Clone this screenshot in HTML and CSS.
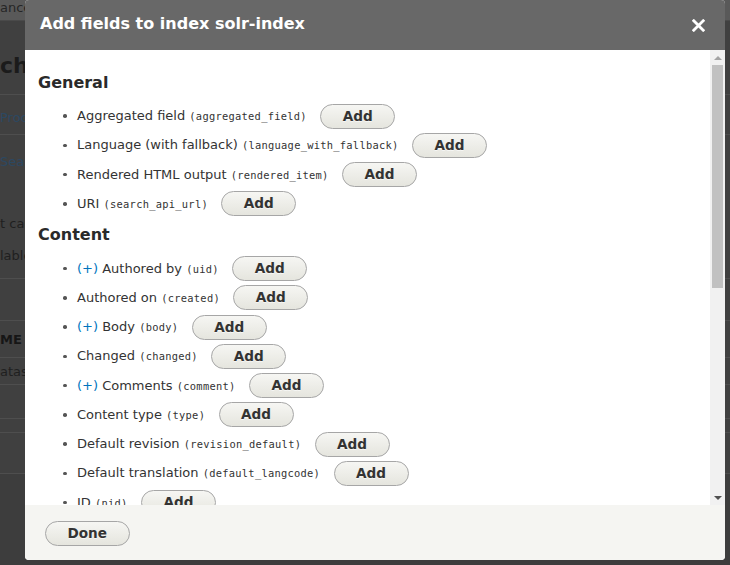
FILE: index.html
```html
<!DOCTYPE html>
<html lang="en">
<head>
<meta charset="utf-8">
<title>Add fields to index solr-index</title>
<link rel="stylesheet" href="styles.css">
</head>
<body>
<div class="page">
  <div class="page-top">ance</div>
  <div class="page-title">ch</div>
  <div class="page-row row-proc"><span class="plink">Proc</span></div>
  <div class="page-row row-block">
    <span class="plink line-sear">Sear</span>
    <span class="ptext line-car">t car</span>
    <span class="ptext line-lable">lable</span>
  </div>
  <div class="page-row row-empty1"></div>
  <div class="page-row row-head"><span class="pbold">ME</span></div>
  <div class="page-row row-data"><span class="ptext">atas</span></div>
  <div class="page-row row-empty2"></div>
  <div class="page-row row-empty3"></div>
  <div class="page-row row-empty4"></div>
</div>

<div class="dialog">
  <div class="titlebar">
    <span class="title">Add fields to index solr-index</span>
    <button class="close" aria-label="Close">
      <svg width="13" height="13" viewBox="0 0 13 13"><path d="M1.8 1.8 L11.2 11.2 M11.2 1.8 L1.8 11.2" stroke="#fff" stroke-width="2.8" stroke-linecap="square" fill="none"/></svg>
    </button>
  </div>
  <div class="body">
    <div class="content">
      <h2 class="group">General</h2>
      <ul class="fields">
        <li><span class="label">Aggregated field <code>(aggregated_field)</code></span><button class="btn">Add</button></li>
        <li><span class="label">Language (with fallback) <code>(language_with_fallback)</code></span><button class="btn">Add</button></li>
        <li><span class="label">Rendered HTML output <code>(rendered_item)</code></span><button class="btn">Add</button></li>
        <li><span class="label">URI <code>(search_api_url)</code></span><button class="btn">Add</button></li>
      </ul>
      <h2 class="group">Content</h2>
      <ul class="fields">
        <li><span class="label"><a class="expand">(+)</a> Authored by <code>(uid)</code></span><button class="btn">Add</button></li>
        <li><span class="label">Authored on <code>(created)</code></span><button class="btn">Add</button></li>
        <li><span class="label"><a class="expand">(+)</a> Body <code>(body)</code></span><button class="btn">Add</button></li>
        <li><span class="label">Changed <code>(changed)</code></span><button class="btn">Add</button></li>
        <li><span class="label"><a class="expand">(+)</a> Comments <code>(comment)</code></span><button class="btn">Add</button></li>
        <li><span class="label">Content type <code>(type)</code></span><button class="btn">Add</button></li>
        <li><span class="label">Default revision <code>(revision_default)</code></span><button class="btn">Add</button></li>
        <li><span class="label">Default translation <code>(default_langcode)</code></span><button class="btn">Add</button></li>
        <li><span class="label">ID <code>(nid)</code></span><button class="btn">Add</button></li>
        <li><span class="label">Language <code>(langcode)</code></span><button class="btn">Add</button></li>
        <li><span class="label">Promoted to front page <code>(promote)</code></span><button class="btn">Add</button></li>
        <li><span class="label">Published <code>(status)</code></span><button class="btn">Add</button></li>
      </ul>
    </div>
    <div class="scrollbar">
      <div class="sb-btn"><span class="arrow-up"></span></div>
      <div class="sb-thumb"></div>
      <div class="sb-track"></div>
      <div class="sb-btn"><span class="arrow-down"></span></div>
    </div>
  </div>
  <div class="buttonpane">
    <button class="btn btn-done">Done</button>
  </div>
</div>
</body>
</html>
```
FILE: styles.css
```css
html, body {
  margin: 0;
  padding: 0;
}
body {
  width: 730px;
  height: 565px;
  overflow: hidden;
  background: #3d3d3d;
  font-family: "DejaVu Sans", "Liberation Sans", sans-serif;
  position: relative;
}

/* ---------- background page (under overlay) ---------- */
.page {
  display: flex;
  flex-direction: column;
  width: 730px;
  background: #404040;
  font-size: 13px;
  color: #1f1f1f;
}
.page-top {
  height: 20px;
  line-height: 16px;
  background: #595959;
  border-bottom: 1px solid #4a4a4a;
  color: #262626;
}
.page-title {
  border-bottom: 1px solid #4e4e4e;
  font-size: 22px;
  font-weight: bold;
  color: #1b1b1b;
  padding-top: 32px;
  line-height: 26px;
  height: 41px;
}
.page-row {
  border-bottom: 1px solid #4e4e4e;
  display: flex;
  flex-direction: column;
}
.plink { color: #2c4862; }
.ptext { color: #1f1f1f; }
.pbold { font-weight: bold; color: #161616; }
.row-proc { height: 40px; justify-content: center; padding-top: 6px; box-sizing: border-box; }
.row-block { height: 143px; }
.line-sear { margin-top: 18px; line-height: 18px; }
.line-car { margin-top: 44px; line-height: 18px; }
.line-lable { margin-top: 14px; line-height: 18px; }
.row-empty1 { height: 41px; }
.row-head { height: 36px; justify-content: center; }
.row-data { height: 26px; justify-content: center; }
.row-empty2 { height: 33px; }
.row-empty3 { height: 13px; }
.row-empty4 { height: 40px; }

/* ---------- dialog ---------- */
.dialog {
  position: absolute;
  left: 25px;
  top: 0;
  width: 700px;
  height: 560px;
  display: flex;
  flex-direction: column;
  background: #fff;
  border-radius: 4px;
  overflow: hidden;
}
.titlebar {
  height: 50px;
  flex: none;
  background: #686868;
  display: flex;
  align-items: center;
  justify-content: space-between;
  padding: 0 20px 2px 15px;
  box-sizing: border-box;
}
.title {
  color: #fff;
  font-size: 16px;
  font-weight: bold;
  line-height: 20px;
}
.close {
  border: 0;
  background: none;
  padding: 0;
  width: 13px;
  height: 13px;
  display: flex;
  margin-top: 2px;
}
.body {
  flex: 1;
  min-height: 0;
  display: flex;
}
.content {
  flex: 1;
  overflow: hidden;
  padding: 22.5px 0 0 13px;
  color: #333;
}
.group {
  margin: 0 0 9px;
  font-size: 16px;
  line-height: 20px;
  font-weight: bold;
  color: #2a2a2a;
}
.fields {
  list-style: none;
  margin: 0 0 6.5px 25px;
  padding: 0;
}
.fields li {
  display: flex;
  align-items: center;
  height: 29.25px;
  font-size: 13px;
}
.fields li::before {
  content: "";
  width: 3.5px;
  height: 3.5px;
  border-radius: 50%;
  background: #555;
  margin-right: 10.5px;
  flex: none;
}
.label {
  line-height: 16px;
  white-space: nowrap;
}
.label code {
  font-family: "DejaVu Sans Mono", "Liberation Mono", monospace;
  font-size: 10.4px;
  letter-spacing: 0.27px;
  color: #333;
}
.expand {
  color: #0074bd;
  text-decoration: none;
}
.btn {
  margin-left: 13.4px;
  flex: none;
  font-family: "DejaVu Sans", "Liberation Sans", sans-serif;
  font-size: 13.6px;
  font-weight: bold;
  color: #333;
  line-height: 15px;
  padding: 4px 21.5px;
  border: 1px solid #a6a6a6;
  border-radius: 20em;
  background: linear-gradient(to bottom, #f6f6f3, #e5e5de);
  text-shadow: 0 1px rgba(255, 255, 255, 0.6);
}

/* ---------- scrollbar ---------- */
.scrollbar {
  width: 15px;
  flex: none;
  background: #f1f1f1;
  display: flex;
  flex-direction: column;
}
.sb-btn {
  height: 15px;
  flex: none;
  display: flex;
  align-items: center;
  justify-content: center;
}
.arrow-up {
  width: 0;
  height: 0;
  border-left: 4px solid transparent;
  border-right: 4px solid transparent;
  border-bottom: 4px solid #a3a3a3;
}
.arrow-down {
  width: 0;
  height: 0;
  border-left: 4px solid transparent;
  border-right: 4px solid transparent;
  border-top: 4px solid #505050;
}
.sb-thumb {
  height: 223px;
  flex: none;
  margin: 0 2px 0 2px;
  background: #c1c1c1;
}
.sb-track {
  flex: 1;
}

/* ---------- button pane ---------- */
.buttonpane {
  height: 55px;
  flex: none;
  background: #f5f5f2;
  padding: 16px 20px 0;
  box-sizing: border-box;
}
.btn-done {
  margin-left: 0;
}
```
